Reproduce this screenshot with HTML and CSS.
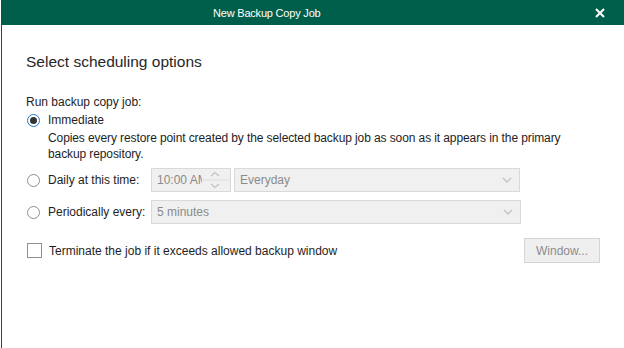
FILE: index.html
```html
<html>
	<head>
		<title>New Backup Copy Job</title>
		<meta charset="UTF-8">
		<link rel="stylesheet" href="styles.css">
	</head>
	<body>
		<div class="window">
			<div class="titlebar">
				<span class="title">New Backup Copy Job</span>
				<svg class="close" width="10" height="10" viewBox="0 0 10 10">
					<path d="M1 1 L9 9 M9 1 L1 9" stroke="#fff" stroke-width="2" />
				</svg>
			</div>
			<div class="content">
				<div class="heading">Select scheduling options</div>
				<div class="label">Run backup copy job:</div>
				<div class="option">
					<span class="radio checked"></span>
					<span>Immediate</span>
				</div>
				<div class="desc">Copies every restore point created by the selected backup job as soon as it appears in the primary<br>backup repository.</div>
				<div class="option boxed daily">
					<span class="radio"></span>
					<span class="optlabel">Daily at this time:</span>
					<div class="field time">
						<span>10:00 AM</span>
						<svg class="spin" width="28" height="22" viewBox="0 0 28 22">
							<path d="M0 11 H27" stroke="#dcdcdc" stroke-width="1" />
							<path d="M9 7 L13 3.5 L17 7" fill="none" stroke="#c4c4c4" stroke-width="1.2" />
							<path d="M9 15 L13 18.5 L17 15" fill="none" stroke="#c4c4c4" stroke-width="1.2" />
						</svg>
					</div>
					<div class="field select day">
						<span>Everyday</span>
						<svg class="chev" width="10" height="6" viewBox="0 0 10 6">
							<path d="M1 1 L5 5 L9 1" fill="none" stroke="#c4c4c4" stroke-width="1.4" />
						</svg>
					</div>
				</div>
				<div class="option boxed period">
					<span class="radio"></span>
					<span class="optlabel">Periodically every:</span>
					<div class="field select every">
						<span>5 minutes</span>
						<svg class="chev" width="10" height="6" viewBox="0 0 10 6">
							<path d="M1 1 L5 5 L9 1" fill="none" stroke="#c4c4c4" stroke-width="1.4" />
						</svg>
					</div>
				</div>
				<div class="terminate">
					<span class="check"></span>
					<span class="termlabel">Terminate the job if it exceeds allowed backup window</span>
					<div class="button">Window...</div>
				</div>
			</div>
		</div>
	</body>
</html>
```

FILE: styles.css
```css
body {
	margin: 0;
	background: #fff;
	font-family: "Liberation Sans", Arial, sans-serif;
	font-size: 12px;
	color: #1e1e1e;
	overflow: hidden;
}
.window {
	margin-left: 1px;
	height: 348px;
	border-left: 1px solid #005f4b;
	box-sizing: border-box;
}
.titlebar {
	height: 25px;
	margin-left: -1px;
	background: #005f4b;
	color: #fff;
	display: flex;
	align-items: center;
	padding-left: 212px;
	padding-right: 19px;
}
.title {
	flex: 1;
	font-size: 11px;
	letter-spacing: -0.2px;
}
.close {
	display: block;
}
.content {
	padding: 27px 24px 0 24px;
}
.heading {
	font-size: 15.5px;
	line-height: 20px;
	color: #262626;
}
.label {
	margin-top: 22px;
	line-height: 16px;
}
.option {
	display: flex;
	align-items: center;
	line-height: 16px;
	margin-top: 2px;
}
.radio {
	width: 11px;
	height: 11px;
	border: 1px solid #8f8f8f;
	border-radius: 50%;
	margin-left: 1px;
	margin-right: 8px;
	display: flex;
	align-items: center;
	justify-content: center;
}
.radio.checked {
	border-color: #1f76cc;
}
.radio.checked::after {
	content: "";
	width: 7px;
	height: 7px;
	border-radius: 50%;
	background: #333;
}
.desc {
	margin-top: 2px;
	margin-left: 22px;
	line-height: 16px;
	letter-spacing: -0.1px;
}
.daily {
	margin-top: 6px;
}
.period {
	margin-top: 8px;
}
.optlabel {
	width: 103px;
}
.field {
	height: 22px;
	background: #f0f0f0;
	border: 1px solid #d9d9d9;
	color: #8a8a8a;
	display: flex;
	align-items: center;
	padding-left: 5px;
	overflow: hidden;
}
.field span {
	flex: 1;
	white-space: nowrap;
}
.time {
	width: 73px;
}
.time span {
	width: 45px;
	flex: none;
	overflow: hidden;
}
.spin {
	display: block;
	flex: none;
}
.day {
	margin-left: 3px;
	width: 279px;
}
.every {
	width: 363px;
}
.chev {
	margin-right: 7px;
	display: block;
}
.terminate {
	margin-top: 14px;
	display: flex;
	align-items: center;
	height: 25px;
}
.check {
	width: 13px;
	height: 13px;
	border: 1px solid #8f8f8f;
	margin-left: 1px;
	margin-right: 7px;
}
.termlabel {
	flex: 1;
}
.button {
	width: 74px;
	height: 23px;
	border: 1px solid #d4d4d4;
	background: #efefef;
	color: #8c8c8c;
	display: flex;
	align-items: center;
	justify-content: center;
}
```
